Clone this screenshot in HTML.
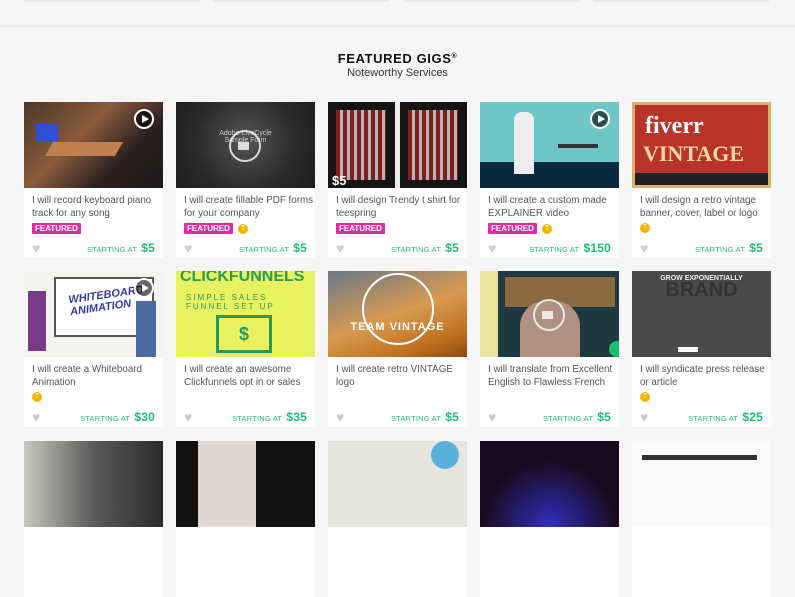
<!DOCTYPE html>
<html><head><meta charset="utf-8"><style>
*{margin:0;padding:0;box-sizing:border-box}
body{width:795px;height:460px;overflow:hidden;background:#f6f6f6;font-family:"Liberation Sans",Arial,sans-serif;position:relative}
.top{position:absolute;top:0;height:2px;background:#e8e8e8}
.sep{position:absolute;left:0;right:0;top:25px;height:2px;background:#ececec}
h1{position:absolute;top:51px;left:0;width:795px;text-align:center;font-size:13px;font-weight:bold;letter-spacing:.6px;color:#111}
h1 sup{font-size:7px;vertical-align:5px}
.sub{position:absolute;top:67px;left:0;width:795px;text-align:center;font-size:11px;color:#333}
.card{position:absolute;width:139px;height:156px;background:#fff}
.img{position:absolute;left:0;top:0;width:139px;height:86px;overflow:hidden}
.t{position:absolute;left:8px;top:92px;width:130px;font-size:9.8px;line-height:13px;color:#555}
.b{position:absolute;left:8px;top:121px;display:flex;align-items:center;gap:5px}
.f{background:#e02aa0;color:#fff;font-size:8px;font-weight:bold;padding:1px 3px;line-height:9px;border-radius:1px}
.o{width:10px;height:10px;border-radius:50%;background:#f5b400;color:#fff;font-size:7px;text-align:center;line-height:10px}
.bot{position:absolute;left:8px;right:8px;top:139px;height:14px}
.h{position:absolute;left:0;top:1px;color:#ccc;font-size:14px;line-height:13px}
.p{position:absolute;right:0;top:0;color:#1dbf73;font-size:7.5px;letter-spacing:.2px;white-space:nowrap}
.p b{font-size:12px;margin-left:2px}
.play{position:absolute;width:20px;height:20px;border-radius:50%;border:2px solid #fff;background:rgba(0,0,0,.6);top:7px;right:9px}
.play:after{content:"";position:absolute;left:6px;top:4px;border-left:7px solid #fff;border-top:4px solid transparent;border-bottom:4px solid transparent}
.cam{position:absolute;width:32px;height:32px;border-radius:50%;border:2px solid rgba(255,255,255,.8);left:53px;top:28px}
.cam:after{content:"";position:absolute;left:7px;top:10px;width:11px;height:8px;background:rgba(255,255,255,.8)}
</style></head><body>
<div class="top" style="left:24px;width:176px"></div>
<div class="top" style="left:213px;width:176px"></div>
<div class="top" style="left:404px;width:176px"></div>
<div class="top" style="left:593px;width:176px"></div>
<div class="sep"></div>
<h1>FEATURED GIGS<sup>®</sup></h1>
<div class="sub">Noteworthy Services</div>

<div class="card" style="left:24px;top:102px"><div class="img" style="background:linear-gradient(135deg,#4a3a2a,#8a5a3a 40%,#2a2020 70%,#1a1a1a)"><div style="position:absolute;left:12px;top:22px;width:22px;height:18px;background:#3050d0"></div><div style="position:absolute;left:25px;top:40px;width:70px;height:14px;background:#c08050;transform:skewX(-30deg)"></div><div class="play"></div></div>
<div class="t">I will record keyboard piano track for any song</div><div class="b"><span class="f">FEATURED</span></div>
<div class="bot"><span class="h">♥</span><span class="p">STARTING AT <b>$5</b></span></div></div>

<div class="card" style="left:176px;top:102px"><div class="img" style="background:radial-gradient(circle at 50% 45%,#555,#2a2a2a 60%,#1e1e1e)"><div style="position:absolute;top:28px;width:139px;text-align:center;color:#ccc;font-size:7px">Adobe LiveCycle<br>Sample Form</div><div class="cam"></div></div>
<div class="t">I will create fillable PDF forms for your company</div><div class="b"><span class="f">FEATURED</span><span class="o">T</span></div>
<div class="bot"><span class="h">♥</span><span class="p">STARTING AT <b>$5</b></span></div></div>

<div class="card" style="left:328px;top:102px"><div class="img" style="background:#151515"><div style="position:absolute;left:8px;top:8px;width:50px;height:70px;background:repeating-linear-gradient(90deg,#a02020 0 4px,#ddd 4px 7px);opacity:.8"></div><div style="position:absolute;left:80px;top:8px;width:50px;height:70px;background:repeating-linear-gradient(90deg,#a02020 0 4px,#ddd 4px 7px);opacity:.8"></div><div style="position:absolute;left:67px;top:0;width:5px;height:86px;background:#eee"></div><div style="position:absolute;left:4px;bottom:0;color:#fff;font-weight:bold;font-size:13px">$5</div></div>
<div class="t">I will design Trendy t shirt for teespring</div><div class="b"><span class="f">FEATURED</span></div>
<div class="bot"><span class="h">♥</span><span class="p">STARTING AT <b>$5</b></span></div></div>

<div class="card" style="left:480px;top:102px"><div class="img" style="background:linear-gradient(#6ec6c6 70%,#0b2a40 70%)"><div style="position:absolute;left:34px;top:10px;width:20px;height:62px;background:#eee;border-radius:8px 8px 0 0"></div><div style="position:absolute;left:78px;top:42px;width:40px;height:4px;background:#333"></div><div class="play"></div></div>
<div class="t">I will create a custom made EXPLAINER video</div><div class="b"><span class="f">FEATURED</span><span class="o">T</span></div>
<div class="bot"><span class="h">♥</span><span class="p">STARTING AT <b>$150</b></span></div></div>

<div class="card" style="left:632px;top:102px"><div class="img" style="background:#b8332a;border:3px solid #d9b070"><div style="position:absolute;left:10px;top:8px;color:#fff;font-size:24px;font-weight:bold;font-family:'Liberation Serif',serif">fiverr</div><div style="position:absolute;left:8px;top:36px;color:#f1d9a0;font-size:22px;font-weight:bold;font-family:'Liberation Serif',serif">VINTAGE</div><div style="position:absolute;left:0;right:0;bottom:0;height:12px;background:#222"></div></div>
<div class="t">I will design a retro vintage banner, cover, label or logo</div><div class="b"><span class="o">T</span></div>
<div class="bot"><span class="h">♥</span><span class="p">STARTING AT <b>$5</b></span></div></div>

<div class="card" style="left:24px;top:271px"><div class="img" style="background:#f4f4f0"><div style="position:absolute;left:30px;top:6px;width:100px;height:60px;border:2px solid #555;background:#fff"></div><div style="position:absolute;left:45px;top:18px;color:#3a3a9a;font-size:11px;font-weight:bold;font-style:italic;transform:rotate(-8deg)">WHITEBOARD<br>ANIMATION</div><div style="position:absolute;left:4px;top:20px;width:18px;height:60px;background:#7a3a8a"></div><div style="position:absolute;left:112px;top:30px;width:20px;height:56px;background:#4a6aa0"></div><div class="play"></div></div>
<div class="t">I will create a Whiteboard Animation</div><div class="b"><span class="o">T</span></div>
<div class="bot"><span class="h">♥</span><span class="p">STARTING AT <b>$30</b></span></div></div>

<div class="card" style="left:176px;top:271px"><div class="img" style="background:#e8f260"><div style="position:absolute;left:4px;top:-3px;color:#2a9a5a;font-size:16px;font-weight:bold">CLICKFUNNELS</div><div style="position:absolute;left:10px;top:22px;color:#2a9a5a;font-size:8px;letter-spacing:2px">SIMPLE SALES<br>FUNNEL SET UP</div><div style="position:absolute;left:40px;top:44px;width:56px;height:38px;border:3px solid #2a9a5a;color:#2a9a5a;font-weight:bold;font-size:18px;text-align:center;line-height:32px">$</div></div>
<div class="t">I will create an awesome Clickfunnels opt in or sales</div>
<div class="bot"><span class="h">♥</span><span class="p">STARTING AT <b>$35</b></span></div></div>

<div class="card" style="left:328px;top:271px"><div class="img" style="background:linear-gradient(160deg,#6a7888,#d89a50 50%,#c07020 80%,#8a4a10)"><div style="position:absolute;left:34px;top:2px;width:72px;height:72px;border:2px solid #fff;border-radius:50%"></div><div style="position:absolute;left:0;width:139px;top:50px;text-align:center;color:#fff;font-size:11px;font-weight:bold;letter-spacing:1px">TEAM VINTAGE</div></div>
<div class="t">I will create retro VINTAGE logo</div>
<div class="bot"><span class="h">♥</span><span class="p">STARTING AT <b>$5</b></span></div></div>

<div class="card" style="left:480px;top:271px"><div class="img" style="background:linear-gradient(90deg,#e8e4a0 0 18px,#1e3a40 18px)"><div style="position:absolute;left:25px;top:6px;width:110px;height:30px;background:#8a6a40"></div><div style="position:absolute;left:40px;top:30px;width:60px;height:56px;background:#b09080;border-radius:25px 25px 0 0"></div><div class="cam"></div><div style="position:absolute;right:-6px;top:70px;width:16px;height:16px;border-radius:50%;background:#1dbf73"></div></div>
<div class="t">I will translate from Excellent English to Flawless French</div>
<div class="bot"><span class="h">♥</span><span class="p">STARTING AT <b>$5</b></span></div></div>

<div class="card" style="left:632px;top:271px"><div class="img" style="background:#4a4a4a"><div style="position:absolute;top:4px;width:139px;text-align:center;color:#eee;font-size:7px;font-weight:bold">GROW EXPONENTIALLY</div><div style="position:absolute;top:8px;width:139px;text-align:center;color:#333;font-size:20px;font-weight:bold">BRAND</div><div style="position:absolute;left:46px;top:76px;width:20px;height:5px;background:#fff"></div></div>
<div class="t">I will syndicate press release or article</div><div class="b"><span class="o">T</span></div>
<div class="bot"><span class="h">♥</span><span class="p">STARTING AT <b>$25</b></span></div></div>

<div class="card" style="left:24px;top:441px"><div class="img" style="background:linear-gradient(90deg,#c8c8c0,#5a5a5a 50%,#2a2a2a)"></div></div>
<div class="card" style="left:176px;top:441px"><div class="img" style="background:linear-gradient(90deg,#111 0 22px,#e0d8d0 22px 80px,#111 80px)"></div></div>
<div class="card" style="left:328px;top:441px"><div class="img" style="background:#e6e6e0"><div style="position:absolute;right:8px;top:0;width:28px;height:28px;border-radius:50%;background:#5ab0d8"></div></div></div>
<div class="card" style="left:480px;top:441px"><div class="img" style="background:radial-gradient(circle at 50% 100%,#3030c0,#1a0a20 60%)"></div></div>
<div class="card" style="left:632px;top:441px"><div class="img" style="background:#fafafa"><div style="position:absolute;left:10px;top:14px;width:115px;height:5px;background:#333"></div></div></div>
</body></html>
